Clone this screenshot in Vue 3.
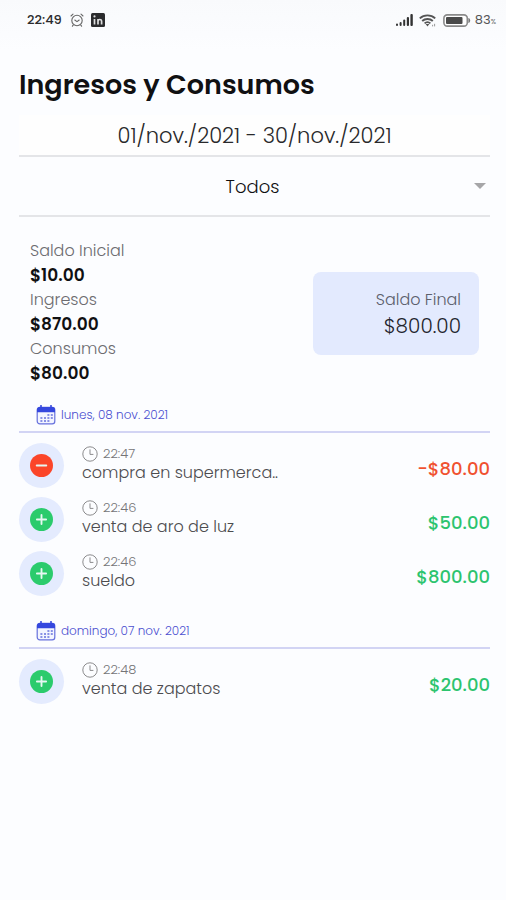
<script setup>
import { ref } from 'vue'

const filter = ref('Todos')

const totals = [
  { label: 'Saldo Inicial', value: '$10.00' },
  { label: 'Ingresos', value: '$870.00' },
  { label: 'Consumos', value: '$80.00' },
]

const days = [
  {
    date: 'lunes, 08 nov. 2021',
    items: [
      { time: '22:47', name: 'compra en supermerca..', amount: '-$80.00', expense: true },
      { time: '22:46', name: 'venta de aro de luz', amount: '$50.00', expense: false },
      { time: '22:46', name: 'sueldo', amount: '$800.00', expense: false },
    ],
  },
  {
    date: 'domingo, 07 nov. 2021',
    items: [{ time: '22:48', name: 'venta de zapatos', amount: '$20.00', expense: false }],
  },
]
</script>

<template>
  <div class="screen">
    <header class="status">
      <span class="clock">22:49</span>
      <svg class="alarm" viewBox="0 0 14 14" fill="none" stroke="#666" stroke-width="1.1" stroke-linecap="round">
        <circle cx="7" cy="7.5" r="5.2" />
        <path d="M1 3 3 1.2M13 3 11 1.2M4.8 7 7 8.6 9.2 7M3.2 12.2 2.4 13.2M10.8 12.2l.8 1" />
      </svg>
      <svg class="linkedin" viewBox="0 0 14 14">
        <rect width="14" height="14" rx="1.5" fill="#2b2b2d" />
        <path d="M3.5 6v5.4M7 6v5.4M7 8.4c0-2.4 3.6-2.6 3.6 0v3" fill="none" stroke="#ddd" stroke-width="1.7" />
        <circle cx="3.5" cy="3.4" r="1.1" fill="#ddd" />
      </svg>
      <span class="spacer"></span>
      <svg class="signal" viewBox="0 0 17 12" fill="#333">
        <rect x="0" y="9.5" width="2" height="2.5" rx="1" />
        <rect x="3.6" y="8" width="2" height="4" rx="1" />
        <rect x="7.2" y="5.5" width="2" height="6.5" rx="1" />
        <rect x="10.8" y="3" width="2.2" height="9" rx="1" />
        <rect x="14.4" y="0" width="2.4" height="12" rx="1" />
      </svg>
      <svg class="wifi" viewBox="0 0 17 13" fill="none" stroke="#555" stroke-width="1.9">
        <path d="M.8 4.4c4.2-4 11.2-4 15.4 0M3.2 7c2.9-2.7 7.7-2.7 10.6 0M5.6 9.4c1.7-1.5 4.1-1.5 5.8 0" />
        <path d="M6.6 10h3.8L8.5 12.6z" fill="#555" stroke="none" />
        <path d="M13.6 12.4v-1.6M15.6 12.4v-2.6" stroke-width="1" stroke="#999" />
      </svg>
      <svg class="battery" viewBox="0 0 28 13">
        <rect x=".9" y=".9" width="23.4" height="11.2" rx="3.4" fill="#fff" stroke="#8a8a8a" stroke-width="1.6" />
        <rect x="3" y="3" width="16.5" height="7" rx="1" fill="#4a4a4a" />
        <path d="M25.4 4c2.4.6 2.4 4.4 0 5z" fill="#777" />
      </svg>
      <span class="charge">83<small>%</small></span>
    </header>

    <main class="content">
      <h1>Ingresos y Consumos</h1>
      <button class="range" type="button">01/nov./2021 - 30/nov./2021</button>
      <div class="filter">
        <select v-model="filter" aria-label="Tipo">
          <option>Todos</option>
          <option>Ingresos</option>
          <option>Consumos</option>
        </select>
        <svg class="caret" viewBox="0 0 12 6"><path d="M0 0h12L6 6z" fill="#a6a6a8" /></svg>
      </div>

      <section class="summary">
        <dl class="totals">
          <template v-for="t in totals" :key="t.label">
            <dt>{{ t.label }}</dt>
            <dd>{{ t.value }}</dd>
          </template>
        </dl>
        <div class="final">
          <span class="final-label">Saldo Final</span>
          <span class="final-value">$800.00</span>
        </div>
      </section>

      <section v-for="day in days" :key="day.date" class="day">
        <h2>
          <svg class="calendar" viewBox="0 0 20 20">
            <rect x="1.2" y="2.4" width="17.6" height="16.4" rx="2.6" fill="#f3f5ff" stroke="#6670dd" stroke-width="1.2" />
            <path d="M1 7.2V4.4C1 3 2 2 3.4 2h13.2C18 2 19 3 19 4.4v2.8z" fill="#3447de" />
            <path d="M5 .6v3M15 .6v3" stroke="#3447de" stroke-width="1.6" stroke-linecap="round" />
            <path d="M11.4 10h2M14.8 10h2M8 13h2M11.4 13h2M14.8 13h2M4.4 13h2M4.4 16h2M8 16h2M11.4 16h2" stroke="#6670dd" stroke-width="1.6" />
          </svg>
          {{ day.date }}
        </h2>
        <ul>
          <li v-for="(item, i) in day.items" :key="i">
            <span class="badge">
              <svg viewBox="0 0 22 22">
                <circle cx="11" cy="11" r="11" :fill="item.expense ? '#fb4529' : '#2bcb6c'" />
                <path :d="item.expense ? 'M6.4 11h9.2' : 'M6.6 11h8.8M11 6.6v8.8'" stroke="#e6f7f2" stroke-width="1.8" stroke-linecap="round" />
              </svg>
            </span>
            <div class="info">
              <span class="time">
                <svg viewBox="0 0 16 16" fill="none" stroke="#8b8b8d" stroke-width="1">
                  <circle cx="8" cy="8" r="7.2" />
                  <path d="M8 3.4V8.4h3.4" />
                </svg>
                {{ item.time }}
              </span>
              <span class="name">{{ item.name }}</span>
            </div>
            <span class="amount" :class="{ expense: item.expense }">{{ item.amount }}</span>
          </li>
        </ul>
      </section>
    </main>
  </div>
</template>

<style>
body {
  background: #fcfdff;
}
</style>

<style scoped>
.screen {
  min-height: 100vh;
  box-sizing: border-box;
  font-family: Poppins, Inter, "Open Sans", sans-serif;
  color: #101012;
  background: linear-gradient(#f9fafc, #fcfdff 50px);
}

.status {
  display: flex;
  align-items: center;
  height: 40px;
  padding: 0 10px 0 27px;
  font-size: 13px;
  color: #2b2b2d;
}

.clock {
  font-weight: 500;
}

.alarm {
  width: 14px;
  height: 14px;
  margin-left: 8px;
}

.linkedin {
  width: 14px;
  height: 14px;
  margin-left: 7px;
}

.spacer {
  flex: 1;
}

.signal {
  width: 17px;
  height: 12px;
}

.wifi {
  width: 17px;
  height: 13px;
  margin-left: 6px;
}

.battery {
  width: 28px;
  height: 13px;
  margin-left: 7px;
}

.charge {
  margin-left: 4px;
  color: #555;
}

.charge small {
  font-size: 7px;
}

.content {
  padding: 25px 16px 0 19px;
}

h1 {
  margin: 0;
  font-size: 27px;
  line-height: 40px;
  font-weight: 600;
}

.range {
  display: block;
  width: 100%;
  height: 42px;
  margin-top: 10px;
  padding: 2px 0 0;
  border: 0;
  border-bottom: 2px solid #e4e5e8;
  background: #fefefe;
  font: 300 21px/38px Poppins, Inter, "Open Sans", sans-serif;
  color: #29292b;
}

.filter {
  display: grid;
  align-items: center;
  border-bottom: 2px solid #e4e5e8;
}

.filter select,
.caret {
  grid-area: 1 / 1;
}

.filter select {
  width: 100%;
  height: 58px;
  padding: 0 4px 0 0;
  border: 0;
  background: transparent;
  appearance: none;
  font: 300 18px Poppins, Inter, "Open Sans", sans-serif;
  color: #101012;
  text-align-last: center;
}

.caret {
  justify-self: end;
  width: 12px;
  height: 6px;
  margin-right: 4px;
  pointer-events: none;
}

.summary {
  display: flex;
  justify-content: space-between;
  align-items: center;
  padding: 21px 11px 0 11px;
}

.totals {
  margin: 0;
  font-size: 16px;
}

.totals dt {
  line-height: 25px;
  font-weight: 300;
  color: #6c6c70;
}

.totals dd {
  margin: 0;
  font-size: 17px;
  line-height: 24px;
  font-weight: 600;
}

.final {
  display: flex;
  flex-direction: column;
  align-items: flex-end;
  box-sizing: border-box;
  width: 37%;
  margin-top: 4px;
  padding: 15px 18px 16px;
  border-radius: 8px;
  background: #e3eafe;
}

.final-label {
  font-size: 16px;
  line-height: 26px;
  font-weight: 300;
  color: #5c606c;
}

.final-value {
  font-size: 20px;
  line-height: 26px;
  font-weight: 300;
  color: #22242c;
}

.day {
  padding-bottom: 13px;
}

.summary + .day {
  padding-top: 12px;
}

h2 {
  display: flex;
  align-items: center;
  gap: 5px;
  box-sizing: border-box;
  height: 36px;
  margin: 0;
  padding: 2px 0 0 17px;
  border-bottom: 2px solid #d2d4f4;
  font-size: 12px;
  font-weight: 300;
  color: #4b4fd0;
}

.calendar {
  width: 20px;
  height: 20px;
}

ul {
  margin: 0;
  padding: 5px 0 0;
  list-style: none;
}

li {
  display: flex;
  align-items: center;
  height: 54px;
}

.badge {
  display: grid;
  place-items: center;
  width: 45px;
  height: 45px;
  border-radius: 50%;
  background: #e4ebfe;
}

.badge svg {
  width: 23px;
  height: 23px;
}

.info {
  display: flex;
  flex: 1;
  flex-direction: column;
  min-width: 0;
  padding: 0 0 2px 18px;
}

.time {
  display: flex;
  align-items: center;
  gap: 5px;
  font-size: 13px;
  line-height: 18px;
  font-weight: 300;
  color: #747477;
}

.time svg {
  width: 16px;
  height: 16px;
}

.name {
  font-size: 16px;
  line-height: 20px;
  font-weight: 300;
  color: #4c4c4f;
  white-space: nowrap;
}

.amount {
  padding-top: 7px;
  font-size: 18px;
  font-weight: 500;
  color: #2cc46e;
}

.amount.expense {
  color: #f0512f;
}
</style>
